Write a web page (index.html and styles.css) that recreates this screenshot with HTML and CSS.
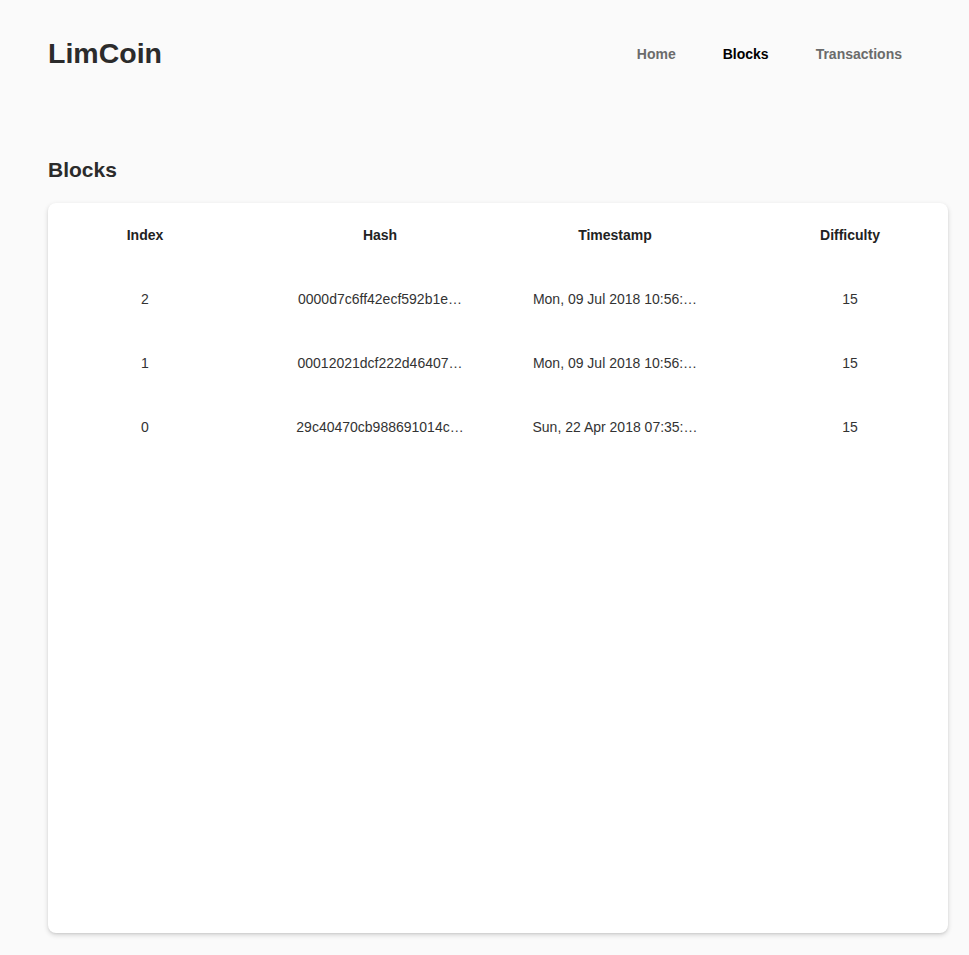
FILE: index.html
```html
<!DOCTYPE html>
<html lang="en">
<head>
<meta charset="utf-8">
<title>LimCoin</title>
<link rel="stylesheet" href="styles.css">
</head>
<body>
<div class="page">
  <header class="header">
    <h1 class="brand">LimCoin</h1>
    <nav class="nav">
      <a class="nav-link" href="#">Home</a>
      <a class="nav-link active" href="#">Blocks</a>
      <a class="nav-link" href="#">Transactions</a>
    </nav>
  </header>
  <h2 class="section-title">Blocks</h2>
  <div class="card">
    <div class="table">
      <div class="row head">
        <div class="cell">Index</div>
        <div class="cell">Hash</div>
        <div class="cell">Timestamp</div>
        <div class="cell last">Difficulty</div>
      </div>
      <div class="row">
        <div class="cell">2</div>
        <div class="cell">0000d7c6ff42ecf592b1e…</div>
        <div class="cell">Mon, 09 Jul 2018 10:56:…</div>
        <div class="cell last">15</div>
      </div>
      <div class="row">
        <div class="cell">1</div>
        <div class="cell">00012021dcf222d46407…</div>
        <div class="cell">Mon, 09 Jul 2018 10:56:…</div>
        <div class="cell last">15</div>
      </div>
      <div class="row">
        <div class="cell">0</div>
        <div class="cell">29c40470cb988691014c…</div>
        <div class="cell">Sun, 22 Apr 2018 07:35:…</div>
        <div class="cell last">15</div>
      </div>
    </div>
  </div>
</div>
</body>
</html>
```

FILE: styles.css
```css
html, body {
  margin: 0;
  padding: 0;
  background: #fafafa;
  font-family: "Liberation Sans", Arial, sans-serif;
  color: #333;
}

.page {
  width: 900px;
  padding: 0 0 22px 48px;
}

.header {
  display: flex;
  justify-content: space-between;
  align-items: center;
  height: 106px;
}

.brand {
  margin: 0;
  font-size: 28.5px;
  font-weight: bold;
  color: #2b2b2b;
  line-height: 1;
}

.nav {
  display: flex;
  gap: 47px;
  padding: 2px 46px 0 0;
}

.nav-link {
  font-size: 14px;
  font-weight: bold;
  color: #6b6b6b;
  text-decoration: none;
}

.nav-link.active {
  color: #000;
}

.section-title {
  margin: 53px 0 0 0;
  font-size: 21px;
  font-weight: bold;
  line-height: 1;
  color: #2b2b2b;
}

.card {
  margin-top: 23px;
  height: 730px;
  background: #fff;
  border-radius: 8px;
  box-shadow: 0 2px 5px rgba(0, 0, 0, 0.16), 0 1px 2px rgba(0, 0, 0, 0.06);
}

.row {
  display: grid;
  grid-template-columns: 226px 244px 226px 204px;
  height: 64px;
  align-items: center;
  font-size: 14px;
}

.row.head {
  font-weight: bold;
  color: #222;
}

.cell {
  display: flex;
  justify-content: center;
  padding: 0 56px 0 24px;
  white-space: nowrap;
}

.cell.last {
  padding: 0 16px 0 24px;
}
```
